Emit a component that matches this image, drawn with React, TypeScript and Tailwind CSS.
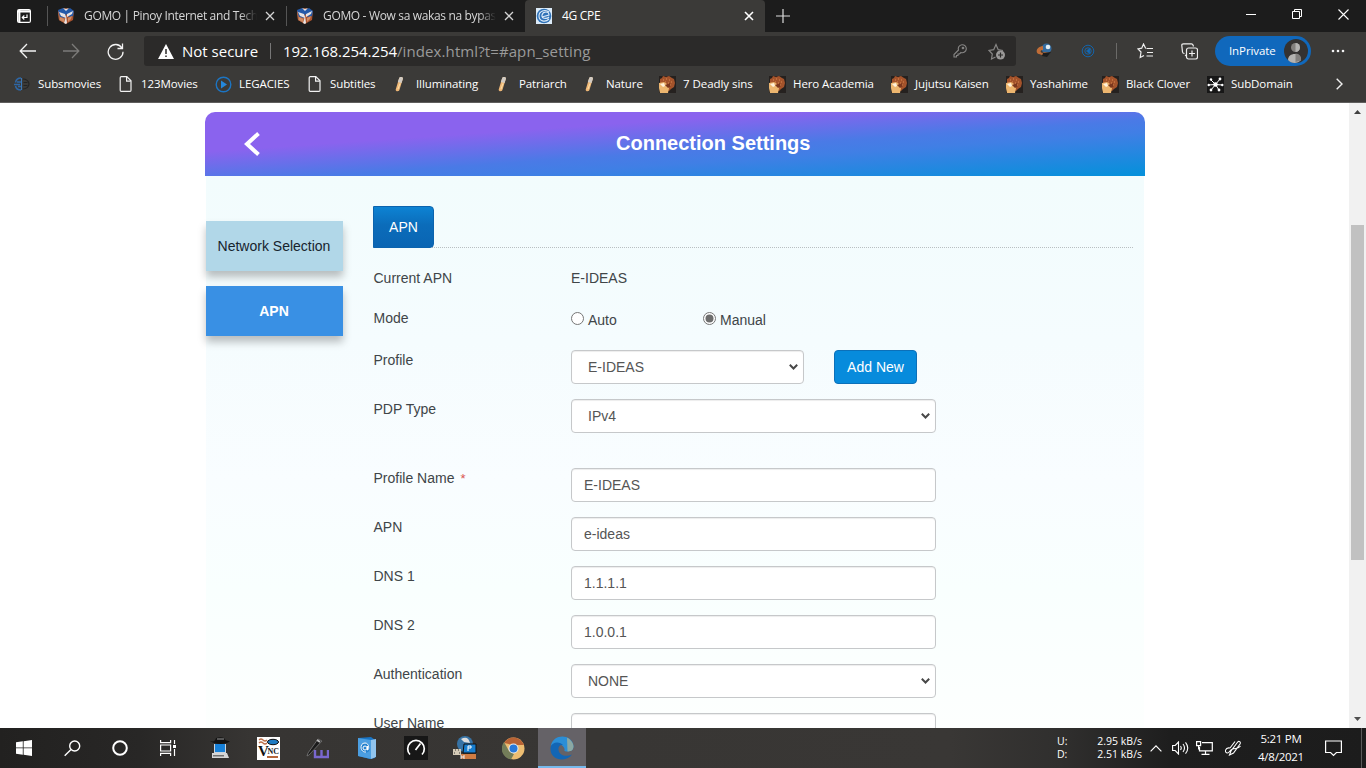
import React from 'react';
import type { ReactNode } from 'react';

const ui = "font-['Open_Sans','Noto_Sans',sans-serif]";

function Close({ bold }: { bold?: boolean }) {
  return (
    <svg width="10" height="10" viewBox="0 0 10 10" fill="none" stroke={bold ? '#fff' : '#d4d4d4'} strokeWidth={bold ? 1.6 : 1.3}>
      <path d="M1 1l8 8M9 1L1 9" />
    </svg>
  );
}

function CubeIcon() {
  return (
    <svg width="18" height="18" viewBox="0 0 18 18" className="shrink-0">
      <path d="M1 4l8-3 8 3-1 9-7 4-7-4z" fill="#a9532f" />
      <path d="M1 4l8 3v10l-7-4z" fill="#b86a45" />
      <path d="M1 3l5-2 3 2 4-2 4 3-1 5-4 1-3-3-1 4-5-1z" fill="#2459a8" />
      <path d="M2 5l6 2 1 4-5-2zM10 7l6-3-1 3-5 3zM6 1l3 1 3-1-3 3zM9 8l1 8-1 1-2-1 1-3z" fill="#e8e4e4" />
      <path d="M3 10l4 2v3l-4-2zM11 11l4-2-1 3-3 3z" fill="#d18c63" />
    </svg>
  );
}

function PageIcon() {
  return (
    <svg width="16" height="16" viewBox="0 0 16 16" fill="none" stroke="#f2f2f2" strokeWidth="1.2">
      <path d="M4.200.6h5.600l4.200 4.200v9.400c0 .6-.4 1.100-1 1.100H4.200c-.6 0-1-.5-1-1.100V1.700c0-.6.4-1.100 1-1.100z" />
      <path d="M9.600.8v4.400h4.200" />
    </svg>
  );
}

function BrushIcon() {
  return (
    <svg width="16" height="16" viewBox="0 0 16 16">
      <path d="M7.200 2c.8-1.700 4.200-1.300 3.700.7L7.400 14c-.5 1.700-4.100 1.600-3.700-.6z" fill="#efb877" />
      <path d="M7.200 2c.8-1.700 4.200-1.300 3.700.7L9.600 7 5.800 6z" fill="#d0cbc4" />
      <path d="M8 7.500L6 13" stroke="#fce0a7" />
    </svg>
  );
}

function HeadIcon() {
  return (
    <svg width="17" height="17" viewBox="0 0 17 17">
      <path d="M0 0h17v17H0z" fill="#25211f" />
      <path d="M1 3l2-1 1-2 3 1 3-1 3 2 2 1 1 4-1 4-3 2-2 2-6-2-3-4z" fill="#a4532b" />
      <path d="M0 7l5-1 3 2 2 4-1 5H1L0 12z" fill="#edb66f" />
      <path d="M1 8l4-1 1 3-2 1z" fill="#fff1da" />
      <path d="M6 9l5-2 1 3-3 2z" fill="#7b371e" />
      <path d="M4 4h1M7 3h1M10 4h1M6 6h1M9 7h1M12 6h1M11 9h1" stroke="#dc8a50" />
    </svg>
  );
}

function SubsIcon() {
  return (
    <svg width="16" height="16" viewBox="0 0 16 16" fill="none">
      <path d="M7 2C4 2 2 4 1.500 6.500M0 8.500h6M1.500 10C2 12.500 4 14 7 14M3 6h4M4 10.500h3" stroke="#2e67a6" strokeWidth="1.500" />
      <path d="M7.500 2v12" stroke="#3b76b5" />
      <path d="M9 3c3 0 6 2 6 5s-3 5-6 5M9.500 6.500h4M9.500 9.500h4" stroke="#232323" strokeWidth="1.100" />
    </svg>
  );
}

function PlayIcon() {
  return (
    <svg width="17" height="17" viewBox="0 0 17 17">
      <circle cx="8.500" cy="8.500" r="7.300" fill="none" stroke="#1c75c4" strokeWidth="1.400" />
      <path d="M6 4.500l6 4-6 4z" fill="#2488dc" />
    </svg>
  );
}

function HubIcon() {
  return (
    <svg width="17" height="17" viewBox="0 0 17 17">
      <path d="M0 0h17v17H0z" fill="#171717" />
      <path d="M8.500 8.500L4 4M8.500 8.500L13 3M8.500 8.500L1 9M8.500 8.500L15.500 9M8.500 8.500L4 14M8.500 8.500L12 14" stroke="#fff" strokeWidth="1" />
      <g fill="#fff"><circle cx="8.500" cy="8.500" r="2.200" /><circle cx="4" cy="3.500" r="1.200" /><circle cx="13" cy="3" r="1.400" /><circle cx="1.700" cy="9" r="1.200" /><circle cx="15.300" cy="9" r="1.200" /><circle cx="4" cy="14" r="1.400" /><circle cx="12" cy="14" r="1.400" /></g>
    </svg>
  );
}

const bookmarks: { label: string; icon: ReactNode; w: string; t?: string }[] = [
  { label: 'Subsmovies', icon: <SubsIcon />, w: 'w-[103px]' },
  { label: '123Movies', icon: <PageIcon />, w: 'w-[98px]', t: 'tracking-[-0.1px]' },
  { label: 'LEGACIES', icon: <PlayIcon />, w: 'w-[91px]', t: 'tracking-[-0.1px]' },
  { label: 'Subtitles', icon: <PageIcon />, w: 'w-[86px]' },
  { label: 'Illuminating', icon: <BrushIcon />, w: 'w-[103px]' },
  { label: 'Patriarch', icon: <BrushIcon />, w: 'w-[87px]' },
  { label: 'Nature', icon: <BrushIcon />, w: 'w-[77px]' },
  { label: '7 Deadly sins', icon: <HeadIcon />, w: 'w-[110px]', t: 'tracking-[-0.05px]' },
  { label: 'Hero Academia', icon: <HeadIcon />, w: 'w-[122px]' },
  { label: 'Jujutsu Kaisen', icon: <HeadIcon />, w: 'w-[115px]' },
  { label: 'Yashahime', icon: <HeadIcon />, w: 'w-[96px]' },
  { label: 'Black Clover', icon: <HeadIcon />, w: 'w-[105px]' },
  { label: 'SubDomain', icon: <HubIcon />, w: 'w-[128px]' },
];

function TabStrip() {
  return (
    <div className="flex h-8 bg-[#1c1c1c] text-[12px] text-[#d6d6d6]">
      <div className="flex w-[47px] items-center justify-center pl-px">
        <svg width="14" height="14" viewBox="0 0 14 14" fill="none" stroke="#fff">
          <rect x=".6" y=".6" width="12.800" height="12.800" rx="1.500" strokeWidth="1.200" />
          <path d="M1 2.300h12M2.300 1v12" strokeWidth="2.200" />
          <path d="M10 5.500v3H5.500M7.300 6.500L5.300 8.500l2 2" strokeWidth="1.200" />
        </svg>
      </div>
      <div className="flex w-[239px] items-center">
        <div className="h-5 w-px bg-[#555]" />
        <div className="ml-[9px]"><CubeIcon /></div>
        <div className="ml-[9px] w-[173px] overflow-hidden whitespace-nowrap tracking-[-0.34px] [mask-image:linear-gradient(to_right,black_90%,transparent)]">GOMO | Pinoy Internet and Tech</div>
        <div className="ml-[8px]"><Close /></div>
      </div>
      <div className="flex w-[239px] items-center">
        <div className="h-5 w-px bg-[#555]" />
        <div className="ml-[9px]"><CubeIcon /></div>
        <div className="ml-[9px] w-[173px] overflow-hidden whitespace-nowrap tracking-[-0.34px] [mask-image:linear-gradient(to_right,black_90%,transparent)]">GOMO - Wow sa wakas na bypas</div>
        <div className="ml-[8px]"><Close /></div>
      </div>
      <div className="flex w-[240px] items-center rounded-t-[4px] bg-[#3b3a38] pl-[11px]">
        <svg width="16" height="16" viewBox="0 0 16 16">
          <path d="M0 0h16v16H0z" fill="#dcebf8" />
          <circle cx="8" cy="8" r="7.300" fill="#2f72b8" />
          <path d="M13 4C9 1 3 3 3 8s6 7 10 3M6 9l7-2c0-4-6-4-7 0s5 4 7 2" fill="none" stroke="#dcebf8" strokeWidth="1.100" />
        </svg>
        <span className="ml-[10px] tracking-[-0.3px] text-white">4G CPE</span>
        <span className="mr-[11px] ml-auto"><Close bold /></span>
      </div>
      <div className="flex w-[36px] items-center justify-center">
        <svg width="14" height="14" viewBox="0 0 14 14" stroke="#dcdcdc" strokeWidth="1.200"><path d="M7 0v14M0 7h14" /></svg>
      </div>
      <div className="ml-auto flex h-7 items-center">
        <div className="flex w-[46px] justify-center"><svg width="10" height="10" stroke="#fff"><path d="M0 5.500h10" /></svg></div>
        <div className="flex w-[46px] justify-center">
          <svg width="10" height="10" viewBox="0 0 10 10" fill="none" stroke="#fff"><path d="M.5 2.500h7v7h-7zM2.500 2.500v-2h7v7h-2" /></svg>
        </div>
        <div className="flex w-[46px] justify-center"><svg width="11" height="11" viewBox="0 0 11 11" stroke="#fff" strokeWidth="1.100"><path d="M.5.5l10 10M10.500.5l-10 10" /></svg></div>
      </div>
    </div>
  );
}

function Toolbar() {
  return (
    <div className="flex h-[38px] items-center">
      <div className="ml-[19px] flex w-[125px] gap-[27px]">
        <svg width="17" height="16" viewBox="0 0 17 16" fill="none" stroke="#f3f3f3" strokeWidth="1.300"><path d="M17 8H1.500M8 1L1.200 8 8 15" /></svg>
        <svg width="17" height="16" viewBox="0 0 17 16" fill="none" stroke="#7c7b79" strokeWidth="1.300"><path d="M0 8h15.500M9 1l6.800 7L9 15" /></svg>
        <svg width="17" height="17" viewBox="0 0 17 17" fill="none" stroke="#f3f3f3" strokeWidth="1.300"><path d="M14.900 5A7.400 7.400 0 1 0 16 8.700M15.500.5V5.500H10.500" /></svg>
      </div>
      <div className="flex h-[30px] w-[872px] items-center rounded-[3px] bg-[#2b2a29] pl-[14px]">
        <svg width="16" height="15" viewBox="0 0 16 15"><path d="M8 0l8 15H0z" fill="#fff" /><path d="M8 5v5M8 11.500v1.500" stroke="#2b2a29" strokeWidth="1.500" /></svg>
        <span className="ml-[8px] w-[79px] whitespace-nowrap text-[15px] tracking-[0px] text-white">Not secure</span>
        <span className="ml-[9px] h-4 w-px bg-[#777]" />
        <span className="ml-[12px] whitespace-nowrap text-[15px] text-[#9a9a9a]"><span className="tracking-[-0.05px] text-white">192.168.254.254</span><span className="tracking-[0.1px]">/index.html?t=#apn_setting</span></span>
        <svg className="ml-auto" width="14" height="14" viewBox="0 0 14 14" fill="none" stroke="#878685" strokeWidth="1.100"><path d="M5.500 6A4 4 0 1 1 8 8.500L6.500 10H5v1.500H3.500V13H1v-2.500z" /><circle cx="10" cy="4" r=".8" /></svg>
        <svg className="mr-[10px] ml-[21px]" width="18" height="17" viewBox="0 0 18 17" fill="none" stroke="#878685" strokeWidth="1.200"><path d="M7.500 14L3.500 16l.8-5L1 7.500l4.700-.8L8 1.500l2.200 5.200 4.800.8" /><circle cx="12.500" cy="12" r="4.500" fill="#9a9998" stroke="none" /><path d="M12.500 9.500v5M10 12h5" stroke="#2b2a29" /></svg>
      </div>
      <svg className="ml-[20px]" width="16" height="16" viewBox="0 0 16 16"><circle cx="10.500" cy="5.500" r="5" fill="#356c9f" /><circle cx="12" cy="4" r="2.300" fill="#e2edf4" /><path d="M7 3C0 4-1 10 3 11l6 2 5-3-5-1-3 1c-2-1-2-3 1-3z" fill="#c06d37" /><path d="M7 10l8-1-4 5-5-1z" fill="#1d1d1d" /></svg>
      <svg className="ml-[29px]" width="14" height="14" viewBox="0 0 14 14" fill="none" stroke="#1464aa" strokeWidth="1"><circle cx="7" cy="7" r="5.800" /><circle cx="7" cy="7" r="3.200" /><path d="M8.500 4.500L5.500 7l3 2.500z" fill="#1769b4" /></svg>
      <span className="ml-[21px] h-4 w-px bg-[#6b6a68]" />
      <svg className="ml-[20px]" width="18" height="16" viewBox="0 0 18 16" fill="none" stroke="#efefef" strokeWidth="1.200"><path d="M9 5.200L8.500 5 6.500 1 4.700 5.200 1 6l3 3-.8 5.500L7 12.500M9.500 5.500H16M10 9.500h6M9.500 13h6.500" /></svg>
      <svg className="ml-[26px]" width="17" height="17" viewBox="0 0 17 17" fill="none" stroke="#efefef" strokeWidth="1.200"><path d="M12.500 3.500L12 2c-.3-.9-.8-1.200-1.500-1.200H2.500C1.200.8.7 1.500.8 2.500L1.500 9c.1 1 .8 1.500 2 1.500M5.500 13L4 12" /><rect x="5.500" y="5" width="11" height="11" rx="2" /><path d="M11 7.500v6M8 10.500h6" /></svg>
      <div className="ml-[17px] flex h-[30px] w-[96px] items-center rounded-full bg-[#1068bc] pl-[14px] text-[11.500px] text-white">
        <span className="w-[47px] whitespace-nowrap tracking-[-0.1px]">InPrivate</span>
        <svg className="ml-[8px]" width="24" height="24" viewBox="0 0 24 24"><circle cx="12" cy="12" r="12" fill="#343231" /><circle cx="11.500" cy="8.500" r="4.500" fill="#83807d" /><path d="M11.500 4a4.500 4.500 0 0 1 0 9z" fill="#b4b3b1" /><path d="M4 21c0-8 13-8 13 0-3 4-10 4-13 0z" fill="#b4b3b1" /><path d="M11.500 14.500c4 0 6 3 5.500 7l-5.500 1.500z" fill="#82807e" /></svg>
      </div>
      <svg className="ml-[20px]" width="14" height="4" viewBox="0 0 14 4" fill="#f3f3f3"><circle cx="2" cy="2" r="1.300" /><circle cx="7" cy="2" r="1.300" /><circle cx="12" cy="2" r="1.300" /></svg>
    </div>
  );
}

function Bookmarks() {
  return (
    <div className="flex h-[28px] items-center pl-[14px] text-[11.500px] text-white">
      {bookmarks.map((b) => (
        <div key={b.label} className={`flex shrink-0 items-center whitespace-nowrap ${b.w}`}>
          <span className="w-[24px] shrink-0">{b.icon}</span>
          <span className={b.t ?? 'tracking-[-0.1px]'}>{b.label}</span>
        </div>
      ))}
      <svg className="ml-px" width="7" height="12" viewBox="0 0 7 12" fill="none" stroke="#eee" strokeWidth="1.400"><path d="M.7.7L6 6 .7 11.300" /></svg>
    </div>
  );
}

function Row({ label, required, children, h = 'h-[49px]' }: { label: string; required?: boolean; children: ReactNode; h?: string }) {
  return (
    <div className={`flex shrink-0 items-start ${h}`}>
      <div className="w-[198px] pl-[0.500px] leading-5">{label}{required && <span className="ml-[6px] text-[13px] text-[#d9534f]">*</span>}</div>
      {children}
    </div>
  );
}

function Select({ value, w }: { value: string; w: string }) {
  return (
    <button className={`flex h-[34px] items-center justify-between rounded-[4px] border border-[#c6c8ca] bg-white pr-[5px] pl-[16px] text-[#555] shadow-[inset_0_1px_1px_rgba(0,0,0,0.075)] ${w}`}>
      {value}
      <svg width="9" height="6" viewBox="0 0 9 6" fill="none" stroke="#484848" strokeWidth="2"><path d="M.8.8l3.700 3.700L8.200.8" /></svg>
    </button>
  );
}

function Field({ value }: { value: string }) {
  return <input defaultValue={value} className="h-[34px] w-[365px] rounded-[4px] border border-[#c6c8ca] bg-white px-[12px] text-[#555] shadow-[inset_0_1px_1px_rgba(0,0,0,0.075)] outline-none" />;
}

function Radio({ label, on }: { label: string; on?: boolean }) {
  return (
    <div className="flex w-[132px] items-start pt-[2px]">
      <svg className="mt-[2px] mr-[4px]" width="13" height="13" viewBox="0 0 13 13"><circle cx="6.500" cy="6.500" r="6" fill="#fff" stroke="#767676" />{on && <circle cx="6.500" cy="6.500" r="4" fill="#6d6d6d" />}</svg>
      <span className="leading-5">{label}</span>
    </div>
  );
}

function Page() {
  return (
    <div className="flex h-[625px] overflow-hidden bg-white font-['Liberation_Sans',Arial,sans-serif] text-[14px] text-[#404548]">
      <div className="w-[205px] shrink-0" />
      <div className="mt-[9px] flex h-[616px] w-[940px] shrink-0 flex-col">
        <div className="flex h-16 shrink-0 items-center rounded-t-[10px] bg-[linear-gradient(to_bottom_right,#8a63ee_31%,#4a7ae6_56%,#407fe5_66%,#0790db_98%)] text-white">
          <svg className="ml-[39px] shrink-0" width="17" height="24" viewBox="0 0 17 24" fill="none" stroke="#fff" strokeWidth="4"><path d="M14.500 1.500L3 12l11.500 10.500" /></svg>
          <h1 className="ml-[355px] pb-[2px] text-[20px] font-bold whitespace-nowrap">Connection Settings</h1>
        </div>
        <div className="mx-px flex flex-1 bg-[linear-gradient(to_bottom,#f2fcfd_0%,#f5fcfe_30%,#f9fdff_55%,#f9fffe_75%,#fdfffe_100%)]">
          <nav className="mt-[45px] flex w-[137px] shrink-0 flex-col gap-[15px]">
            <div className="flex h-[50px] items-center justify-center bg-[#b1d7e8] pr-px text-[#17242e] shadow-[0_6px_8px_rgba(0,0,0,0.25)]">Network Selection</div>
            <div className="flex h-[50px] items-center justify-center bg-[#3990e4] pr-px font-bold text-white shadow-[0_6px_8px_rgba(0,0,0,0.25)]">APN</div>
          </nav>
          <main className="mt-[30px] ml-[30px] flex h-[522px] w-[760px] flex-col">
            <div className="h-[42px] shrink-0 border-b border-dotted border-[#b9bfc2]">
              <div className="flex h-[42px] w-[61px] items-center justify-center rounded-r-[4px] border border-[#0b63ae] bg-[linear-gradient(to_bottom,#0d83d3_0%,#0b6cba_45%,#0a65b3_100%)] text-white">APN</div>
            </div>
            <div className="mt-[20px] flex flex-col">
              <Row label="Current APN" h="h-[40px]"><span className="leading-5">E-IDEAS</span></Row>
              <Row label="Mode" h="h-[42px]"><Radio label="Auto" /><Radio label="Manual" on /></Row>
              <Row label="Profile">
                <Select value="E-IDEAS" w="w-[233px]" />
                <button className="ml-[30px] h-[34px] w-[83px] rounded-[4px] border border-[#0c70b9] bg-[#078bdc] text-white">Add New</button>
              </Row>
              <Row label="PDP Type" h="h-[69px]"><Select value="IPv4" w="w-[365px]" /></Row>
              <Row label="Profile Name" required><Field value="E-IDEAS" /></Row>
              <Row label="APN"><Field value="e-ideas" /></Row>
              <Row label="DNS 1"><Field value="1.1.1.1" /></Row>
              <Row label="DNS 2"><Field value="1.0.0.1" /></Row>
              <Row label="Authentication"><Select value="NONE" w="w-[365px]" /></Row>
              <Row label="User Name"><Field value="" /></Row>
            </div>
          </main>
        </div>
      </div>
      <div className="ml-auto flex w-[17px] flex-col items-center bg-[#f1f1f1]">
        <svg className="mt-[7px] shrink-0" width="7" height="4" viewBox="0 0 7 4" fill="#404040"><path d="M3.500 0L7 4H0z" /></svg>
        <div className="mt-[111px] h-[335px] w-[13px] shrink-0 bg-[#c1c1c1]" />
        <svg className="mt-auto mb-[7px] shrink-0" width="7" height="4" viewBox="0 0 7 4" fill="#505050"><path d="M3.500 4L7 0H0z" /></svg>
      </div>
    </div>
  );
}

const apps: { name: string; icon: ReactNode }[] = [
  { name: 'spy', icon: <svg width="20" height="24" viewBox="0 0 20 24"><path d="M4 8h12v9H4z" fill="#c9d3dc" /><path d="M5 8h10v8H5z" fill="#1680d8" /><path d="M2 17h15l2 5H2z" fill="#d5d5d5" /><path d="M3 19h11v1.500H3z" fill="#707070" /><path d="M0 5c4 1 5 0 6-3 3-1 6-1 8 0 1 2 2 3 6 3-3 4-15 4-20 0z" fill="#121212" /><path d="M7 3h7" stroke="#999" /></svg> },
  { name: 'vnc', icon: <svg width="23" height="23" viewBox="0 0 23 23"><path d="M0 0h23v23H0z" fill="#fff" /><text x="1" y="19" fontFamily="Liberation Serif, serif" fontSize="15" fontWeight="bold" fill="#111">V</text><text x="10.500" y="17" fontFamily="Liberation Serif, serif" fontSize="8" fontWeight="bold" fill="#222">NC</text><path d="M2 3q2-2 4 0t4 0M2 6q2-2 4 0t4 0" fill="none" stroke="#bb704b" strokeWidth="1.300" /><ellipse cx="16" cy="5" rx="5.500" ry="2.700" fill="#1e7bc3" stroke="#111" /><path d="M10 20h11" stroke="#b5673c" strokeWidth="2" /></svg> },
  { name: 'pen', icon: <svg width="23" height="21" viewBox="0 0 23 21"><path d="M12 1l4 2L3 17l-2 1 1-3z" fill="#1b1b1b" stroke="#777" strokeWidth=".8" /><path d="M11 2l3 2" stroke="#bbb" strokeWidth="2" /><path d="M9 12v7h13v-7M15.500 12v7" fill="none" stroke="#7967cf" strokeWidth="2.400" /></svg> },
  { name: 'contacts', icon: <svg width="20" height="24" viewBox="0 0 20 24"><path d="M1 2l13-1 4 3v18l-5 1-12-3z" fill="#1875c7" /><path d="M1 2l13 2v19L1 20z" fill="#4b9ee1" /><path d="M14 4l5-1v18l-5 2z" fill="#91c4ee" /><circle cx="8" cy="12" r="5" fill="#2682cf" /><path d="M10.500 10v4c2 0 2-7-2.500-7-6 0-5 10 1 9M10 12a2 2 0 1 0-4 0 2 2 0 0 0 4 0" fill="none" stroke="#fff" /></svg> },
  { name: 'gauge', icon: <svg width="24" height="24" viewBox="0 0 24 24"><path d="M0 0h24v24H0z" fill="#171717" /><path d="M6 18.500a8.300 8.300 0 1 1 12 0M11.500 14l5-6.500" fill="none" stroke="#fff" strokeWidth="1.700" /></svg> },
  { name: 'remote', icon: <svg width="24" height="24" viewBox="0 0 24 24"><circle cx="12" cy="8" r="8" fill="#3773a5" /><path d="M8 3q7-4 9 4l-6-1z" fill="#ddd" /><path d="M11 8h12v9H10z" fill="#167dce" stroke="#111" /><path d="M15 10v5M15 10h3v2h-3" stroke="#fff" fill="none" /><path d="M0 13h8v6H0z" fill="#d5cbb7" /><path d="M2 14h1M5 14h1M1 17h1M6 17h1" stroke="#333" /><path d="M8 18h15v5H8z" fill="#cf7b42" /><path d="M8 19v4M8 21h3M11 19v4" stroke="#eee" /></svg> },
  { name: 'chrome', icon: <svg width="23" height="23" viewBox="0 0 23 23"><circle cx="11.500" cy="11.500" r="11" fill="#edbd72" /><path d="M2 6a11 11 0 0 1 19 0l1 2H11z" fill="#b86335" /><path d="M2 5l5 9 5 3-3 5.500A11 11 0 0 1 2 5z" fill="#747d59" /><circle cx="11.500" cy="11.500" r="5" fill="#eee" /><circle cx="11.500" cy="11.500" r="4" fill="#2979d9" /></svg> },
];

function Taskbar() {
  return (
    <div className="flex h-10 items-center bg-[linear-gradient(to_right,#222120_0,#282726_140px,#373533_250px,#393735_950px,#302f2e_1060px,#1e1e1e_1170px,#1c1c1c_100%)] text-[11.500px] text-white">
      <div className="flex w-12 justify-center"><svg width="16" height="16" viewBox="0 0 16 16" fill="#fff"><path d="M0 2.300L6.800 1.300v6.200H0zM7.600 1.200L16 0v7.500H7.600zM0 8.300h6.800v6.400L0 13.700zM7.600 8.300H16V16l-8.400-1.200z" /></svg></div>
      <div className="flex w-12 justify-center"><svg width="17" height="17" viewBox="0 0 17 17" fill="none" stroke="#fff" strokeWidth="1.400"><circle cx="10.700" cy="6" r="5" /><path d="M7 9.500L.7 15.800" /></svg></div>
      <div className="flex w-12 justify-center"><svg width="16" height="16" viewBox="0 0 16 16" fill="none" stroke="#fff" strokeWidth="2"><circle cx="8" cy="8" r="6.800" /></svg></div>
      <div className="mr-[3px] flex w-12 justify-center"><svg width="16" height="16" viewBox="0 0 16 16" fill="none" stroke="#fff" strokeWidth="1.200"><path d="M.6 0v2.600h10V0M.6 16v-2.600h10V16M.6 5h10v6H.6zM14.500 0v4M14.500 9v7" /><path d="M13 5h3v3h-3z" fill="#fff" stroke="none" /></svg></div>
      {apps.map((a) => <div key={a.name} className="flex w-[49px] justify-center">{a.icon}</div>)}
      <div className="flex h-10 w-[48px] flex-col items-center justify-between bg-[#656267]">
        <svg className="mt-[8px]" width="24" height="24" viewBox="0 0 24 24">
          <path d="M.8 10C3-2.500 21.500-2.500 23.400 9.500c.6 4.500-3.400 6.500-7.400 6-1.500-.2-2-1-1.400-2C14 8 6 6 .8 10z" fill="#2b8ed6" />
          <path d="M17 1.800c7 3.500 8.500 11 3.500 13.200l-3 .5z" fill="#8ba8a3" />
          <path d="M.6 11C2 5.500 10 5 13.500 9.500 10 8 8 11 8.500 14c.8 5 7 7.500 13.500 4.500C16 27-1 25 .6 11z" fill="#1266b5" />
        </svg>
        <div className="h-[2px] w-full bg-[#76b9ed]" />
      </div>
      <div className="ml-auto flex w-[85px] flex-col text-[10.500px] leading-[13px]">
        <div className="flex justify-between"><span>U:</span><span className="whitespace-nowrap">2.95 kB/s</span></div>
        <div className="flex justify-between"><span>D:</span><span className="whitespace-nowrap">2.51 kB/s</span></div>
      </div>
      <svg className="ml-[8px]" width="12" height="7" viewBox="0 0 12 7" fill="none" stroke="#fff" strokeWidth="1.200"><path d="M.6 6.300L6 .9l5.400 5.400" /></svg>
      <svg className="ml-[10px]" width="17" height="14" viewBox="0 0 17 14" fill="none" stroke="#fff" strokeWidth="1.100"><path d="M.6 4.500h2.600L6.500 1v12L3.200 9.500H.6zM8.500 5q1.500 2 0 4M11 3q3 4 0 8M13.500 1.300q4.500 5.700 0 11.400" /></svg>
      <svg className="ml-[7px]" width="17" height="14" viewBox="0 0 17 14" fill="none" stroke="#fff" strokeWidth="1.200"><path d="M6 1.600h10.300v8.300H3.500V6M9.500 10v3M5.500 13.300h8M.6.6h4v4h-4zM2.600 4.600v4" /></svg>
      <svg className="ml-[12px]" width="17" height="16" viewBox="0 0 17 16" fill="none" stroke="#fff" strokeWidth="1.100"><path d="M6 11L4.500 15l4-2L15 4c1-2-1-3.500-2.300-2zM10 1.500L5 8M5 8c-5-1-6 5-2.500 5 2 0 2-3 5-4 4-1 6 0 8-3" /></svg>
      <div className="ml-[11px] w-[56px] text-center text-[11.500px] leading-[18px] tracking-[-0.25px]"><div>5:21 PM</div><div>4/8/2021</div></div>
      <svg className="ml-[16px]" width="17" height="17" viewBox="0 0 17 17" fill="none" stroke="#fff" strokeWidth="1.200"><path d="M.6 1h15.800v11.500h-5L8.500 15.500l-2.900-3h-5z" /></svg>
      <div className="mr-[4px] ml-[19px] h-10 w-px bg-[#5a5a5a]" />
    </div>
  );
}

export default function App() {
  return (
    <div className={`h-[768px] w-[1366px] overflow-hidden bg-[#3b3a38] ${ui}`}>
      <TabStrip />
      <Toolbar />
      <Bookmarks />
      <div className="h-[5px] border-b border-[#5f5e5d]" />
      <Page />
      <Taskbar />
    </div>
  );
}
